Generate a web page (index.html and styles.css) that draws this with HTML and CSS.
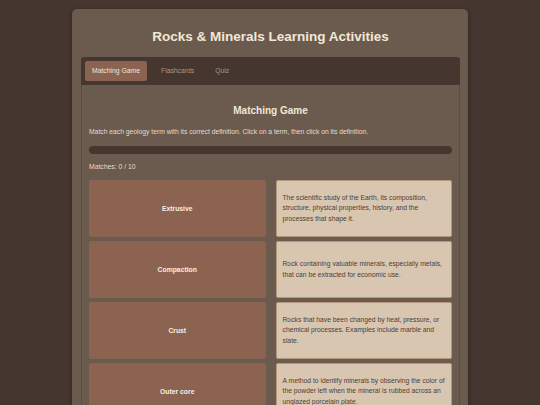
FILE: index.html
```html
<!DOCTYPE html>
<html>
<head>
<meta charset="utf-8">
<link rel="stylesheet" href="styles.css">
</head>
<body>
<div class="container">
  <h1 class="title">Rocks &amp; Minerals Learning Activities</h1>
  <div class="tabs">
    <div class="tab active">Matching Game</div>
    <div class="tab">Flashcards</div>
    <div class="tab">Quiz</div>
  </div>
  <div class="panel">
    <h2 class="heading">Matching Game</h2>
    <p class="desc">Match each geology term with its correct definition. Click on a term, then click on its definition.</p>
    <div class="progress"></div>
    <p class="matches">Matches: 0 / 10</p>
    <div class="grid">
      <div class="term">Extrusive</div>
      <div class="def">The scientific study of the Earth, its composition, structure, physical properties, history, and the processes that shape it.</div>
      <div class="term">Compaction</div>
      <div class="def">Rock containing valuable minerals, especially metals, that can be extracted for economic use.</div>
      <div class="term">Crust</div>
      <div class="def">Rocks that have been changed by heat, pressure, or chemical processes. Examples include marble and slate.</div>
      <div class="term">Outer core</div>
      <div class="def">A method to identify minerals by observing the color of the powder left when the mineral is rubbed across an unglazed porcelain plate.</div>
    </div>
  </div>
</div>
</body>
</html>
```
FILE: styles.css
```css
html, body {
  margin: 0;
  padding: 0;
  background: #45362f;
  font-family: "Liberation Sans", Arial, sans-serif;
  overflow: hidden;
}
.container {
  width: 396px;
  box-sizing: border-box;
  margin: 9px auto 0;
  background: #6b5b4e;
  border-radius: 5px;
  padding: 0 8px 0 9px;
  box-shadow: 0 1px 4px rgba(0,0,0,0.35);
  height: 420px;
}
.title {
  margin: 0;
  padding: 19px 0 11px;
  font-size: 13.5px;
  line-height: 18px;
  font-weight: bold;
  color: #f2e8d6;
  text-align: center;
}
.tabs {
  display: flex;
  gap: 7px;
  background: #45362f;
  padding: 4px;
  border-radius: 3px 3px 0 0;
  height: 28px;
  box-sizing: border-box;
}
.tab {
  padding: 0 7px;
  height: 20px;
  line-height: 20px;
  font-size: 6.8px;
  color: #a8988a;
  border-radius: 2px;
}
.tab.active {
  background: #8b6350;
  color: #efe3d3;
}
.panel {
  border: 1px solid #5c4d42;
  border-top: none;
  padding: 19px 7px 20px;
  background: #6b5b4e;
}
.heading {
  margin: 0 0 9px;
  font-size: 10px;
  line-height: 14px;
  color: #f0e6d6;
  text-align: center;
}
.desc {
  margin: 0 0 9px;
  font-size: 6.75px;
  line-height: 10px;
  color: #e6dacb;
}
.progress {
  height: 8px;
  border-radius: 4px;
  background: #45362f;
  margin-bottom: 8px;
}
.matches {
  margin: 0 0 8px;
  font-size: 6.8px;
  line-height: 10px;
  color: #e6dacb;
}
.grid {
  display: grid;
  grid-template-columns: 1fr 1fr;
  column-gap: 10px;
  row-gap: 4px;
}
.term, .def {
  min-height: 57px;
  box-sizing: border-box;
  display: flex;
  align-items: center;
  border-radius: 2px;
}
.term {
  background: #8b6350;
  color: #f6eee2;
  font-weight: bold;
  font-size: 6.8px;
  justify-content: center;
  text-align: center;
}
.def {
  background: #d8c6b1;
  border: 1px solid #b8987c;
  color: #4d3f36;
  font-size: 6.75px;
  line-height: 10.5px;
  padding: 6px 3px 6px 6px;
}
```
